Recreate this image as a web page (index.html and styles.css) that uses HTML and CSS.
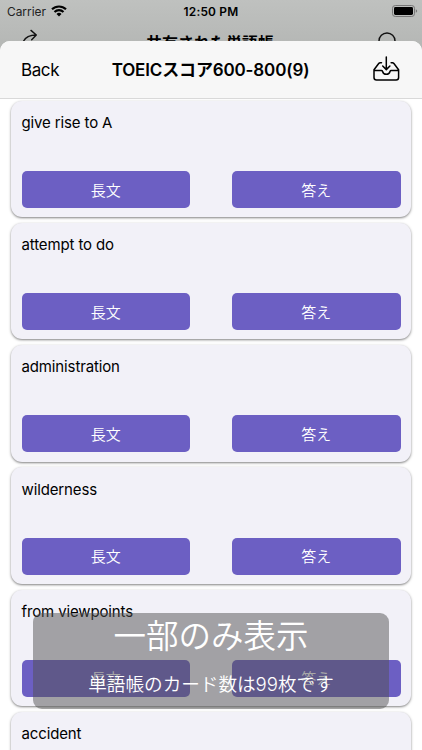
FILE: index.html
```
<!DOCTYPE html>
<html lang="ja">
<head>
<meta charset="utf-8">
<title>TOEICスコア600-800(9)</title>
<link rel="stylesheet" href="styles.css">
</head>
<body>
<div class="screen">
  <header class="backdrop">
    <div class="status">
      <div class="carrier"><span>Carrier</span>
        <svg class="wifi" width="16" height="12" viewBox="0 0 16 12" fill="none" stroke="#000" stroke-width="2.1"><path d="M1 4.3a10 10 0 0 1 14 0M3.5 7a6.4 6.4 0 0 1 9 0"/><path d="M8 11.4 5.5 8.9a3.6 3.6 0 0 1 5 0z" fill="#000" stroke="none"/></svg>
      </div>
      <span class="time">12:50 PM</span>
      <svg class="battery" width="26" height="12" viewBox="0 0 26 12"><rect x=".5" y=".5" width="22" height="11" rx="2.8" fill="none" stroke="#777"/><rect x="2" y="2" width="19" height="8" rx="1.4"/><path d="M23.8 4.200v3.600q1.400-.5 1.400-1.800T23.800 4.200" fill="#777"/></svg>
    </div>
    <div class="under">
      <svg width="18" height="18" viewBox="0 0 18 18" fill="none" stroke="#111" stroke-width="1.4" stroke-linecap="round" stroke-linejoin="round"><path d="M.8 14C2.500 8.500 7 6 14.300 6M9 1.400 14.300 6l-4.600 4.700"/></svg>
      <span class="undertitle">共有された単語帳</span>
      <svg width="22" height="22" viewBox="0 0 22 22" fill="none" stroke="#111" stroke-width="1.4"><circle cx="10" cy="9" r="8"/><path d="m16 15 5 5"/></svg>
    </div>
  </header>
  <main class="sheet">
    <nav class="nav">
      <span class="back">Back</span>
      <h1>TOEICスコア600-800(9)</h1>
      <svg class="tray" width="28" height="26" viewBox="0 0 28 26" fill="none" stroke="#000" stroke-width="1.5" stroke-linecap="round" stroke-linejoin="round"><path d="M14.300 1v12.400M10.700 10l3.600 3.600 3.600-3.600M9.500 6.700H8.200Q7.300 6.700 6.700 7.500L2 13.800v7.700q0 2.500 2.500 2.500h19.600q2.500 0 2.500-2.500v-7.700L21.900 7.500Q21.300 6.700 20.400 6.700h-1.300M2 14.600h7.400q.9 0 1.200.9.700 2.800 3.700 2.800t3.700-2.800q.3-.9 1.200-.9h7.400"/></svg>
    </nav>
    <section class="list">
      <article class="card"><h2>give rise to A</h2><div class="actions"><button>長文</button><button>答え</button></div></article>
      <article class="card"><h2>attempt to do</h2><div class="actions"><button>長文</button><button>答え</button></div></article>
      <article class="card"><h2>administration</h2><div class="actions"><button>長文</button><button>答え</button></div></article>
      <article class="card"><h2>wilderness</h2><div class="actions"><button>長文</button><button>答え</button></div></article>
      <article class="card"><h2>from viewpoints</h2><div class="actions"><button>長文</button><button>答え</button></div></article>
      <article class="card"><h2>accident</h2><div class="actions"><button>長文</button><button>答え</button></div></article>
    </section>
  </main>
  <aside class="toast"><strong>一部のみ表示</strong><p>単語帳のカード数は99枚です</p></aside>
</div>
</body>
</html>
```
FILE: styles.css
```
* { box-sizing: border-box; }
body { margin: 0; font-family: Inter, "Noto Sans CJK JP", sans-serif; color: #000; }
.screen { position: relative; width: 422px; height: 750px; overflow: hidden; background: #b6b8b6; display: flex; flex-direction: column; }
.backdrop { height: 41px; flex: none; overflow: hidden; background: linear-gradient(#bfc1bf, #b6b8b6); }
.status { height: 22px; display: grid; grid-template-columns: 1fr auto 1fr; align-items: center; padding: 0 4px 0 7px; }
.carrier { display: flex; align-items: center; gap: 5px; font-size: 11.900px; color: #222; }
.time { font-size: 11.900px; font-weight: 600; letter-spacing: .2px; margin-left: -3px; }
.battery { justify-self: end; }
.under { display: flex; justify-content: space-between; align-items: flex-start; padding: 7px 23px 0 22px; }
.undertitle { font-size: 16px; font-weight: 700; line-height: 24px; margin: 2px 0 0 3px; }
.under svg:last-child { margin-top: 3px; }
.sheet { flex: 1; min-height: 0; background: #fff; border-radius: 10px 10px 0 0; overflow: hidden; }
.nav { height: 57.500px; background: #f7f7f7; border-bottom: 1px solid #d9d9d9; display: grid; grid-template-columns: 1fr auto 1fr; align-items: center; padding: 1px 22px 0 21px; }
.back { font-size: 17px; letter-spacing: -.4px; }
h1 { margin: 0; font-size: 17px; font-weight: 600; line-height: 24px; letter-spacing: -.15px; white-space: nowrap; }
.tray { justify-self: end; margin-bottom: 1px; }
.list { display: flex; flex-direction: column; gap: 5.700px; padding: 2.300px 11px 0 10.500px; }
.card { height: 116.500px; flex: none; background: #f2f1f8; border-radius: 11px; box-shadow: 0 1px 2.500px rgba(0,0,0,.5); padding: 12.300px 10.500px 9.300px 11px; display: flex; flex-direction: column; justify-content: space-between; }
h2 { margin: 0; font-size: 15px; font-weight: 400; line-height: 20px; letter-spacing: -.13px; }
.actions { display: grid; grid-template-columns: 1fr 1fr; gap: 42px; }
button { height: 37px; border: 0; border-radius: 5px; background: #6c5fc3; color: #fff; font: 350 15px/20px "Noto Sans CJK JP", sans-serif; padding: 0; }
.toast { position: absolute; left: 33px; top: 613px; width: 356px; height: 96px; border-radius: 9px; background: rgba(82,82,82,.5); color: #fff; text-align: center; }
.toast strong { display: block; font-size: 32.500px; font-weight: 350; line-height: 48px; }
.toast p { margin: 10px 0 0; font-size: 18.600px; font-weight: 350; line-height: 27px; }
```
